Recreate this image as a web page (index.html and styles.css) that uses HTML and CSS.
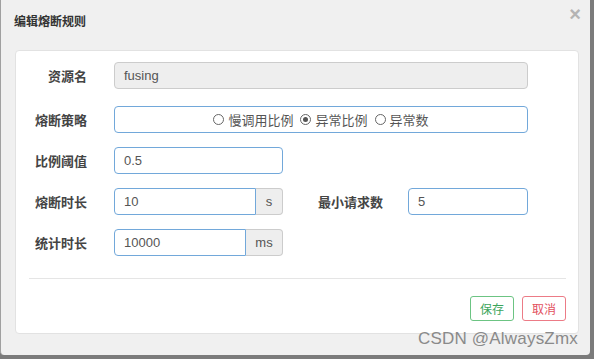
FILE: index.html
```html
<!DOCTYPE html>
<html lang="zh-CN">
<head>
    <meta charset="UTF-8">
    <title>编辑熔断规则</title>
    <link rel="stylesheet" href="styles.css">
</head>
<body>
    <div class="modal">
        <div class="modal-header">
            <h3>编辑熔断规则</h3>
            <span class="close">×</span>
        </div>
        <div class="card">
            <div class="form-row first">
                <label>资源名</label>
                <div class="control full disabled">fusing</div>
            </div>
            <div class="form-row">
                <label>熔断策略</label>
                <div class="control full radios">
                    <span class="radio"><i></i>慢调用比例</span>
                    <span class="radio checked"><i></i>异常比例</span>
                    <span class="radio"><i></i>异常数</span>
                </div>
            </div>
            <div class="form-row">
                <label>比例阈值</label>
                <div class="control short">0.5</div>
            </div>
            <div class="form-row">
                <label>熔断时长</label>
                <div class="input-group">
                    <div class="control grouped">10</div>
                    <span class="addon">s</span>
                </div>
                <label class="label-wide">最小请求数</label>
                <div class="control small">5</div>
            </div>
            <div class="form-row">
                <label>统计时长</label>
                <div class="input-group">
                    <div class="control grouped">10000</div>
                    <span class="addon wide">ms</span>
                </div>
            </div>
            <div class="divider"></div>
            <div class="footer">
                <button class="btn save">保存</button>
                <button class="btn cancel">取消</button>
            </div>
        </div>
        <div class="watermark">CSDN @AlwaysZmx</div>
    </div>
</body>
</html>
```

FILE: styles.css
```css
body {
    margin: 0;
    background-color: #7b7b7b;
    font-family: "Liberation Sans", "Noto Sans CJK SC", sans-serif;
    font-size: 13px;
    color: #555;
}
.modal {
    position: relative;
    width: 590px;
    height: 355px;
    background-color: #f0f0f0;
    border-left: 1px solid #a0a0a0;
    box-sizing: border-box;
    border-radius: 0 0 4px 4px;
}
.modal-header {
    display: flex;
    justify-content: space-between;
    align-items: flex-start;
    padding: 13px 9px 19px 13px;
}
.modal-header h3 {
    margin: 0;
    font-size: 12px;
    line-height: 18px;
    font-weight: bold;
    color: #333;
}
.close {
    margin-top: -9px;
    font-size: 20px;
    font-weight: bold;
    color: #b4b4b4;
    line-height: 20px;
}
.card {
    margin: 0 11px 0 14px;
    height: 284px;
    box-sizing: border-box;
    background: #fff;
    border: 1px solid #e2e2e2;
    border-radius: 4px;
    padding-top: 11px;
}
.form-row {
    display: flex;
    align-items: center;
    height: 27px;
    margin-bottom: 14px;
}
.form-row.first {
    margin-bottom: 17px;
}
.form-row label {
    width: 71px;
    margin-right: 27px;
    text-align: right;
    font-weight: bold;
    color: #444;
}
.form-row .label-wide {
    width: 100px;
    margin-right: 25px;
}
.control {
    height: 27px;
    box-sizing: border-box;
    border: 1px solid #72a8da;
    border-radius: 4px;
    padding: 0 9px;
    display: flex;
    align-items: center;
    color: #555;
}
.full {
    width: 414px;
}
.short {
    width: 169px;
}
.small {
    width: 120px;
}
.disabled {
    background: #eee;
    border-color: #ccc;
}
.radios {
    justify-content: center;
    gap: 7px;
}
.radio {
    display: flex;
    align-items: center;
}
.radio i {
    width: 9px;
    height: 9px;
    border: 1px solid #666;
    border-radius: 50%;
    margin-right: 4px;
    position: relative;
}
.radio.checked i::after {
    content: "";
    position: absolute;
    left: 2px;
    top: 2px;
    width: 5px;
    height: 5px;
    border-radius: 50%;
    background: #555;
}
.input-group {
    display: flex;
    width: 169px;
    height: 27px;
}
.grouped {
    flex: 1;
    border-radius: 4px 0 0 4px;
}
.addon {
    width: 27px;
    box-sizing: border-box;
    background: #eee;
    border: 1px solid #ccc;
    border-left: none;
    border-radius: 0 4px 4px 0;
    display: flex;
    align-items: center;
    justify-content: center;
    color: #555;
}
.addon.wide {
    width: 37px;
}
.divider {
    margin: 22px 12px 0 13px;
    border-top: 1px solid #e5e5e5;
}
.footer {
    display: flex;
    justify-content: flex-end;
    gap: 8px;
    padding: 17px 12px 0 0;
}
.btn {
    width: 44px;
    height: 25px;
    padding: 0;
    background: #fff;
    border-radius: 3px;
    font-family: "Liberation Sans", "Noto Sans CJK SC", sans-serif;
    font-size: 12px;
    cursor: pointer;
}
.save {
    border: 1px solid #6cc483;
    color: #3ba55c;
}
.cancel {
    border: 1px solid #ec7b86;
    color: #e2505e;
}
.watermark {
    position: absolute;
    right: 12px;
    bottom: 6px;
    font-family: "Liberation Sans", sans-serif;
    font-size: 17px;
    color: #8a8a8a;
    letter-spacing: 0.2px;
}
```
